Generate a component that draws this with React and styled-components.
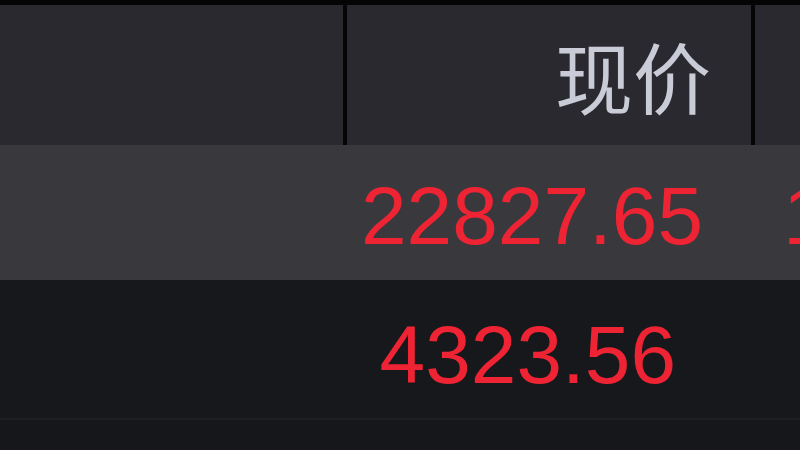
import styled, { createGlobalStyle } from 'styled-components';

const GlobalStyle = createGlobalStyle`
    html, body {
        margin: 0;
        padding: 0;
        background: #16171a;
        overflow: hidden;
    }
`

const columns = '347px 408px 1fr';

const Table = styled.div`
    width: 800px;
    height: 450px;
    background: #16171a;
    display: flex;
    flex-direction: column;
    font-family: "Liberation Sans", "Noto Sans CJK SC", sans-serif;
`

const HeaderRow = styled.div`
    display: grid;
    grid-template-columns: ${columns};
    height: 140px;
    border-top: 5px solid #050506;
    background: #050506;
`

const HeaderCell = styled.div`
    display: flex;
    align-items: center;
    justify-content: flex-end;
    padding-right: ${p => p.$pr || 0}px;
    background: #2a292f;
    border-right: ${p => (p.$last ? 0 : 4)}px solid #050506;
    color: #c9ccd6;
    font-family: "Noto Sans CJK SC", sans-serif;
    font-size: 78px;
    overflow: hidden;
`

const Row = styled.div`
    display: grid;
    grid-template-columns: ${columns};
    height: ${p => p.$h}px;
    background: ${p => p.$bg};
    border-bottom: ${p => p.$line ? '2px solid #1f2024' : 'none'};
    box-sizing: border-box;
`

const PriceCell = styled.div`
    display: flex;
    align-items: center;
    justify-content: flex-end;
    padding-right: ${p => p.$pr}px;
    padding-top: ${p => p.$pt || 0}px;
    color: #ee2434;
    font-size: 82px;
    white-space: nowrap;
    overflow: hidden;
`

const Cell = styled.div`
    overflow: hidden;
    display: flex;
    align-items: center;
    padding-left: ${p => p.$pl || 0}px;
    padding-top: ${p => p.$pt || 0}px;
    color: #ee2434;
    font-size: 82px;
    white-space: nowrap;
`

const App = () => {
    return (
        <Table>
            <GlobalStyle />
            <HeaderRow>
                <HeaderCell />
                <HeaderCell $pr={40}>现价</HeaderCell>
                <HeaderCell $last />
            </HeaderRow>
            <Row $h={135} $bg="#39393d">
                <Cell />
                <PriceCell $pr={52} $pt={6}>22827.65</PriceCell>
                <Cell $pl={28} $pt={6}>1</Cell>
            </Row>
            <Row $h={140} $bg="#17181b" $line>
                <Cell />
                <PriceCell $pr={79} $pt={12}>4323.56</PriceCell>
                <Cell />
            </Row>
        </Table>
    )
}

export default App
